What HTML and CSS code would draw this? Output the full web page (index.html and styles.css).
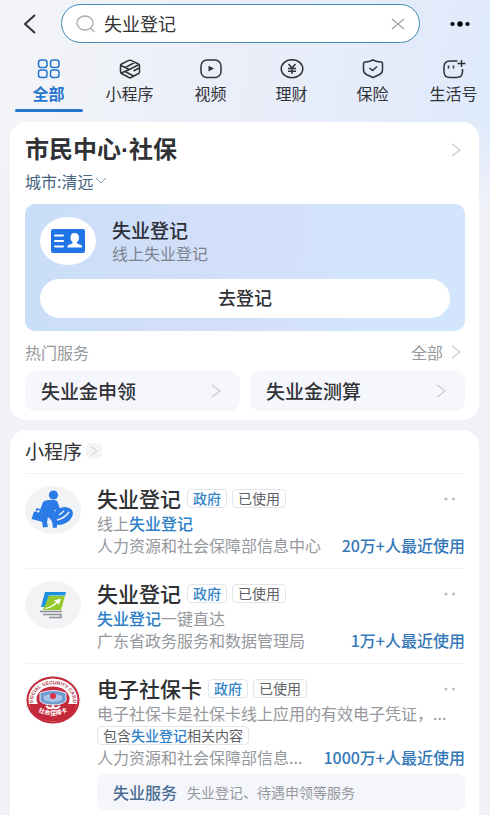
FILE: index.html
```html
<!DOCTYPE html>
<html lang="zh-CN">
<head>
<meta charset="utf-8">
<meta name="viewport" content="width=device-width, initial-scale=1">
<title>失业登记</title>
<link rel="stylesheet" href="styles.css">
</head>
<body>
<svg class="defs" width="0" height="0" aria-hidden="true">
  <symbol id="chevron" viewBox="0 0 10 16"><path d="M1 2l8 6-8 6"/></symbol>
  <symbol id="dots" viewBox="0 0 14 4"><circle cx="3" cy="2" r="1.6"/><circle cx="10.500" cy="2" r="1.6"/></symbol>
</svg>

<header class="top">
  <form class="bar" role="search">
    <button class="icon-btn back" type="button" aria-label="返回"><svg width="14" height="20" viewBox="0 0 14 20"><path d="M12 1L2 10l10 9"/></svg></button>
    <div class="search">
      <svg class="glass" width="20" height="18" viewBox="0 0 20 18"><ellipse cx="9" cy="8" rx="8" ry="7"/><path d="M14.500 13l4 4"/></svg>
      <input type="text" value="失业登记" aria-label="搜索">
      <button class="icon-btn clear" type="button" aria-label="清除"><svg width="14" height="12" viewBox="0 0 14 12"><path d="M1 1l12 10M13 1L1 11"/></svg></button>
    </div>
    <button class="icon-btn more" type="button" aria-label="更多"><svg width="20" height="6" viewBox="0 0 20 6"><circle cx="2.500" cy="3" r="2.100"/><circle cx="10" cy="3" r="2.700"/><circle cx="17.500" cy="3" r="2.100"/></svg></button>
  </form>
  <nav class="tabs">
    <a class="tab active" href="#all"><svg width="24" height="20" viewBox="0 0 24 20"><rect x="1.500" y="1" width="8.500" height="7.500" rx="2.500"/><rect x="13.500" y="1" width="8.500" height="7.500" rx="2.500"/><rect x="1.500" y="11" width="8.500" height="7.500" rx="2.500"/><rect x="13.500" y="11" width="8.500" height="7.500" rx="2.500"/></svg>全部</a>
    <a class="tab" href="#mini"><svg width="24" height="20" viewBox="0 0 24 20"><path d="M11 1.400Q12 1 13 1.400L20.500 5Q21.500 5.500 21.500 6.500V13Q21.500 14 20.500 14.500L13 18.500Q12 19 11 18.500L3.500 14.500Q2.500 14 2.500 13V6.500Q2.500 5.500 3.500 5zM3 6.500L11.500 10.500 3 14M11.500 10.500L21 5.500M7.500 8.500L16.500 3.500M7 12.500L15.500 17M15.500 12L21 9"/></svg>小程序</a>
    <a class="tab" href="#video"><svg width="24" height="20" viewBox="0 0 24 20"><rect x="2" y="1" width="20" height="17.500" rx="6"/><path class="solid" d="M9.500 6.800v5.600l5.500-2.800z"/></svg>视频</a>
    <a class="tab" href="#money"><svg width="24" height="20" viewBox="0 0 24 20"><ellipse cx="12" cy="9.700" rx="10.800" ry="9"/><path d="M8.500 5L12 9l3.500-4M8 9.500h8M8 12.200h8M12 9v6"/></svg>理财</a>
    <a class="tab" href="#insurance"><svg width="24" height="20" viewBox="0 0 24 20"><path d="M12 1Q16 3 20 3Q21.500 3 21.500 4.500V11Q21.500 14 18.500 15.500L12 18.500L5.500 15.500Q2.500 14 2.500 11V4.500Q2.500 3 4 3Q8 3 12 1zM8.500 9l3 2.500 4.500-4"/></svg>保险</a>
    <a class="tab" href="#life"><svg width="24" height="20" viewBox="0 0 24 20"><path d="M15.500 2H8Q2 2 2 8v4.500Q2 18.500 8 18.500h6.500Q20.500 18.500 20.500 12.500V10"/><path d="M6.500 6.500v3M11.500 6.500v3M15.500 4.500h8M19.500 1v7"/></svg>生活号</a>
  </nav>
</header>

<main>
  <section class="card center">
    <div class="row">
      <h1>市民中心·社保</h1>
      <a class="go" href="#center" aria-label="市民中心"><svg class="chev"><use href="#chevron"/></svg></a>
    </div>
    <button class="city" type="button">城市:清远<svg width="12" height="8" viewBox="0 0 12 8"><path d="M1 1l5 5 5-5"/></svg></button>
    <div class="panel">
      <div class="panel-head">
        <span class="avatar white"><svg width="34" height="24" viewBox="0 0 34 24"><rect width="34" height="24" rx="2" fill="#1f74e8"/><path d="M4 6.500h8M4 12h8M4 17.500h8" stroke="#fff" stroke-width="2" stroke-linecap="round"/><path d="M23.500 4c3 0 4.500 1.800 4.500 4.500 0 2-.8 3.500-2 4.500v1.500l4 1.500c.8.400 1 1 1 2.500H16.500c0-1.500.2-2.100 1-2.500l4-1.500V13c-1.200-1-2-2.500-2-4.500C19.500 5.800 20.500 4 23.500 4z" fill="#fff"/></svg></span>
        <div>
          <h2>失业登记</h2>
          <p>线上失业登记</p>
        </div>
      </div>
      <button class="primary" type="button">去登记</button>
    </div>
    <div class="row hot"><span>热门服务</span><a class="go" href="#services">全部<svg class="chev"><use href="#chevron"/></svg></a></div>
    <div class="services">
      <a class="service" href="#apply">失业金申领<svg class="chev"><use href="#chevron"/></svg></a>
      <a class="service" href="#estimate">失业金测算<svg class="chev"><use href="#chevron"/></svg></a>
    </div>
  </section>

  <section class="card list">
    <h2 class="list-title">小程序<a href="#more" aria-label="更多小程序"><svg class="chev"><use href="#chevron"/></svg></a></h2>

    <article class="item">
      <span class="avatar"><svg width="44" height="40" viewBox="0 0 44 40" fill="#2b7be6"><ellipse cx="22.500" cy="5" rx="4.600" ry="4.500"/><path d="M12 12Q14 10 18 10h5q3 0 4 3l2 6 5-1 1 3-7 2.500-4-4-1 5 3 5v8l-4 .500-1-7-4-4-1 5 1 5-5 .500-1-6 1-12-1.500 5-3.500 1z"/><path d="M3 21.500l11.500 2.500-1 8.500L.500 29z"/><path d="M5.500 21.500l.500-2.500 6 1.500-.500 2.500" fill="none" stroke="#2b7be6" stroke-width="1.500"/><ellipse cx="31" cy="26" rx="11.500" ry="8" transform="rotate(-28 31 26)"/><path d="M26 30q8-2 12-8M28 25l5-4" fill="none" stroke="#f2f3f5" stroke-width="1.400"/></svg></span>
      <div class="body">
        <div class="row"><h3>失业登记</h3><span class="tag gov">政府</span><span class="tag">已使用</span><button class="icon-btn menu" type="button" aria-label="更多操作"><svg width="14" height="4"><use href="#dots"/></svg></button></div>
        <p>线上<em>失业登记</em></p>
        <div class="row meta"><span>人力资源和社会保障部信息中心</span><strong>20万+人最近使用</strong></div>
      </div>
    </article>

    <article class="item">
      <span class="avatar"><svg width="28" height="28" viewBox="0 0 28 28"><path d="M6 1h21l-1 3.500H10L6 16H2z" fill="#1d91dc"/><path d="M10 5h16l-4 14H4z" fill="#94c92b"/><path d="M6 17q6-1 11-6l-2-1.500 7-2-2 6-1.500-1.500Q13 17 6 18z" fill="#fff"/><path d="M1 20.500h22M4 23.500h18v3H10" fill="none" stroke="#8c8e98" stroke-width="1.500"/></svg></span>
      <div class="body">
        <div class="row"><h3>失业登记</h3><span class="tag gov">政府</span><span class="tag">已使用</span><button class="icon-btn menu" type="button" aria-label="更多操作"><svg width="14" height="4"><use href="#dots"/></svg></button></div>
        <p><em>失业登记</em>一键直达</p>
        <div class="row meta"><span>广东省政务服务和数据管理局</span><strong>1万+人最近使用</strong></div>
      </div>
    </article>

    <article class="item">
      <span class="avatar"><svg width="54" height="48" viewBox="0 0 54 48"><defs><path id="arc-top" d="M7.500 29A20 17 0 1 1 46.500 29"/><path id="arc-bottom" d="M6 30A22.500 14 0 0 0 48 30"/></defs><ellipse cx="27" cy="24" rx="26.500" ry="23.500" fill="#c5283a"/><ellipse cx="27" cy="24" rx="24.500" ry="21.500" fill="#fff"/><path d="M3 28h48Q48 45 27 45.500Q6 45 3 28z" fill="#c5283a"/><ellipse cx="27" cy="23" rx="16.500" ry="12.500" fill="#c5283a"/><path d="M14 17q13-5 26 0v8q-4 4-13 4t-13-4z" fill="#6f9bd0" stroke="#e8eef8"/><path d="M18 20q9-4 18 0v4q-9 4-18 0z" fill="#a9c5e8"/><circle cx="27" cy="20" r="3" fill="#db3144"/><path d="M20 30q3 3 6 2l1-2 1 2q3 1 6-2" fill="none" stroke="#fff" stroke-width="2"/><text class="seal-en"><textPath href="#arc-top" startOffset="50%">SOCIAL SECURITY CARD</textPath></text><text class="seal-cn"><textPath href="#arc-bottom" startOffset="50%">社会保障卡</textPath></text></svg></span>
      <div class="body">
        <div class="row"><h3>电子社保卡</h3><span class="tag gov">政府</span><span class="tag">已使用</span><button class="icon-btn menu" type="button" aria-label="更多操作"><svg width="14" height="4"><use href="#dots"/></svg></button></div>
        <p>电子社保卡是社保卡线上应用的有效电子凭证，...</p>
        <span class="tag match">包含<em>失业登记</em>相关内容</span>
        <div class="row meta"><span>人力资源和社会保障部信息...</span><strong>1000万+人最近使用</strong></div>
        <a class="sub" href="#unemployment"><b>失业服务</b><span>失业登记、待遇申领等服务</span></a>
      </div>
    </article>
  </section>
</main>
</body>
</html>
```

FILE: styles.css
```css
* { box-sizing: border-box; }

body {
  margin: 0;
  background:
    linear-gradient(to bottom, transparent 120px, #f0f2f8 210px),
    linear-gradient(100deg, #f4f5f8 0%, #eceff9 35%, #e3ebfa 65%, #d8e8fc 100%);
  color: #303236;
  font-family: "Noto Sans CJK SC", sans-serif;
  font-size: 16px;
  line-height: 22px;
  overflow: hidden;
}

h1, h2, h3, p { margin: 0; }
a { color: inherit; text-decoration: none; }
button { font: inherit; color: inherit; border: 0; cursor: pointer; }
em { font-style: normal; color: #2d7fc8; font-weight: 500; }
svg { display: block; flex: none; }
.defs { position: absolute; }
.row { display: flex; align-items: center; }
.icon-btn { display: flex; padding: 0; background: none; }
.icon-btn path, .glass { fill: none; stroke: currentColor; }

.bar {
  display: flex;
  align-items: center;
  padding: 4px 20px 0 23px;
}
.back { margin-right: 24px; }
.back path { stroke-width: 2; }
.search {
  display: flex;
  flex: 1;
  align-items: center;
  min-width: 0;
  height: 39px;
  padding: 0 14px;
  border: 1px solid #4489b8;
  border-radius: 20px;
  background: #fff;
}
.glass { color: #a8aaae; stroke-width: 1.3; }
.search input {
  flex: 1;
  min-width: 0;
  padding: 0 0 2px 8px;
  border: 0;
  outline: 0;
  background: none;
  color: #333;
  font: inherit;
  font-size: 18px;
}
.clear { color: #a3a5aa; }
.clear path { stroke-width: 1.3; }
.more { margin-left: 30px; }

.tabs {
  display: grid;
  grid-template-columns: repeat(6, 1fr);
  margin: 16px -4px 0 8px;
}
.tab {
  display: flex;
  flex-direction: column;
  align-items: center;
  gap: 3px;
}
.tab svg { fill: none; stroke: currentColor; stroke-width: 1.5; stroke-linejoin: round; }
.tab .solid { fill: currentColor; stroke: none; }
.tab.active { color: #2676ce; font-weight: 700; }
.tab.active::after {
  content: "";
  width: 68px;
  height: 3px;
  margin-top: 2px;
  border-radius: 2px;
  background: #2676ce;
}

main {
  display: grid;
  gap: 10px;
  padding: 10px 11px 0 10px;
}
.card {
  min-width: 0;
  padding: 12px 14px 9px 15px;
  border-radius: 16px;
  background: #fff;
}
.chev {
  width: 10px;
  height: 16px;
  fill: none;
  stroke: #cccdd1;
  stroke-width: 1.3;
}
.go { display: flex; align-items: center; gap: 8px; margin-left: auto; padding-right: 4px; }

/* Latin face first keeps the middle dot narrow */
h1 { font-family: "Liberation Sans", "Noto Sans CJK SC", sans-serif; font-size: 24px; line-height: 32px; }
.city {
  display: flex;
  align-items: center;
  gap: 2px;
  margin-top: 4px;
  padding: 0;
  background: none;
  color: #45657f;
}
.city svg { fill: none; stroke: #8699a8; }

.panel {
  margin-top: 12px;
  padding: 13px 15px;
  border-radius: 10px;
  background: linear-gradient(100deg, #c9def8 0%, #d3dff8 40%, #d4e0fa 58%, #d2e5fd 75%);
}
.panel-head { display: flex; align-items: center; gap: 16px; color: #7d8490; }
.panel h2 { color: #2c3038; font-size: 19px; line-height: 24px; font-weight: 500; }
.avatar {
  display: flex;
  flex: none;
  align-items: center;
  justify-content: center;
  width: 56px;
  height: 48px;
  border-radius: 50%;
  background: #f2f3f5;
}
.avatar.white { background: #fff; }
.primary {
  width: 100%;
  height: 39px;
  margin-top: 14px;
  padding: 0 0 3px;
  border-radius: 20px;
  background: #fff;
  font-size: 18px;
  font-weight: 500;
}

.hot { margin-top: 10px; color: #96989c; }
.services { display: grid; grid-template-columns: 1fr 1fr; gap: 10px; margin-top: 8px; }
.service {
  display: flex;
  align-items: center;
  justify-content: space-between;
  height: 40px;
  padding: 0 19px 0 16px;
  border-radius: 10px;
  background: #f5f7fc;
  font-size: 19px;
  font-weight: 500;
}

.list { padding: 10px 14px 20px 15px; }
.list-title {
  display: flex;
  align-items: center;
  gap: 4px;
  padding-bottom: 11px;
  font-size: 19px;
  line-height: 22px;
  font-weight: 400;
}
.list-title a { padding: 2px 4px; border-radius: 4px; background: #f5f5f6; }
.list-title .chev { width: 8px; height: 12px; }

.item {
  display: flex;
  gap: 16px;
  padding: 11px 0 12px;
  border-top: 1px solid #f2f3f5;
  color: #96989c;
}
.item > .avatar { margin-top: 1px; }
.body { flex: 1; min-width: 0; }
.body h3 { margin-right: 6px; color: #2e3033; font-size: 21px; line-height: 27px; font-weight: 500; }
.body p { overflow: hidden; white-space: nowrap; }
.tag {
  flex: none;
  margin-right: 5px;
  padding: 0 5px;
  border: 1px solid #e2e5e9;
  border-radius: 4px;
  color: #606266;
  font-size: 14px;
  line-height: 17px;
}
.gov { color: #3485c8; font-weight: 500; }
.menu { margin-left: auto; padding-right: 8px; }
.menu svg { fill: #bcbec2; }
.meta { justify-content: space-between; gap: 8px; white-space: nowrap; }
.meta span { overflow: hidden; }
.meta strong { flex: none; color: #3478b9; font-weight: 500; }
.match { display: block; width: fit-content; margin: 2px 0 1px; }
.sub {
  display: flex;
  align-items: center;
  gap: 10px;
  height: 36px;
  margin-top: 6px;
  padding: 0 16px;
  border-radius: 8px;
  background: #f4f6fc;
  font-size: 14px;
}
.sub b { color: #4c6c94; font-size: 16px; font-weight: 500; }
.seal-en, .seal-cn { text-anchor: middle; font-weight: 700; }
.seal-en { fill: #b0404c; font-family: "Liberation Sans", sans-serif; font-size: 5px; }
.seal-cn { fill: #fff; font-size: 6px; }
```
